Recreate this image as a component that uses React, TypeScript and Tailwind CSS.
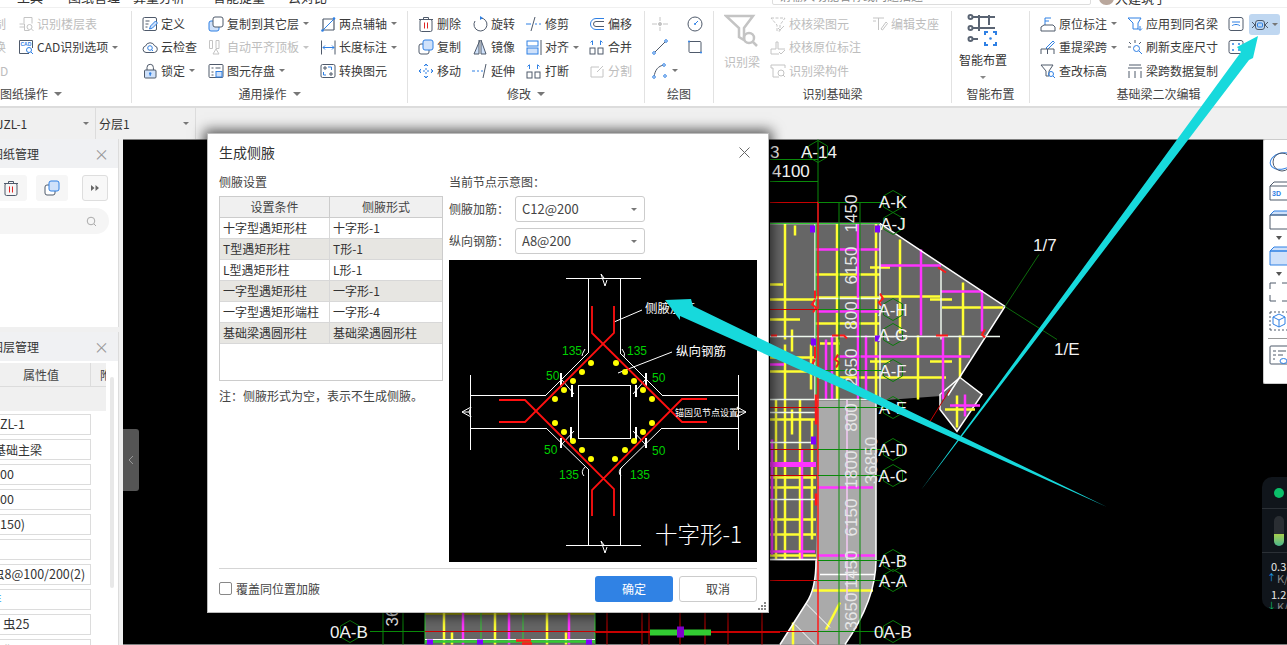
import type { ReactNode } from 'react';

const G = '#4f5a6b';
const B = '#2f80e4';
const L = '#cfe1fa';
const OFF = '#c4c4c4';

function Svg({ children, w = 16, h = 16 }: { children: ReactNode; w?: number; h?: number }) {
  return (
    <svg width={w} height={h} viewBox={`0 0 ${w} ${h}`} fill="none" strokeWidth={1} className="shrink-0">
      {children}
    </svg>
  );
}

const icons: Record<string, ReactNode> = {
  floorTable: <g stroke={OFF}><path d="M6 1.5h8v6M1.5 8h5v6.5h5M6 1.5v6M1.5 11h5" /><circle cx="11.5" cy="11" r="2.5" /><path d="m13.5 13 2 2" /></g>,
  cadOpt: <g><path d="M11 14.5H1.5v-13h13V9" stroke={G} /><text x="2.5" y="6.5" fontSize="5" fontWeight="700" fill={B} fontFamily="Liberation Sans">CAD</text><circle cx="11" cy="11" r="2.5" stroke={B} /><path d="m13 13 2 2" stroke={B} /></g>,
  define: <g stroke={G}><rect x="1" y="1.5" width="13.5" height="13" rx="1.5" /><path d="M3.5 5h4M3.5 8h3M3.5 11h2" /><path d="m7.5 13 1-3 5-5 2 2-5 5z" stroke={B} fill={L} /></g>,
  cloud: <g><path d="M4 13.5a3.3 3.3 0 0 1-.4-6.5 4.8 4.8 0 0 1 9-.2 3.4 3.4 0 0 1-.2 6.7z" stroke={G} /><circle cx="8" cy="9" r="2.3" stroke={B} /><path d="m9.7 10.7 1.3 1.3" stroke={B} /></g>,
  lock: <g><path d="M5 7V4.500a3.2 3.2 0 0 1 6.400 0V7" stroke={G} /><rect x="2.500" y="7" width="11.500" height="8" rx="1" stroke={G} fill={L} /><circle cx="8.200" cy="10.500" r="1.200" fill={B} /><path d="M8.200 11v2" stroke={B} /></g>,
  copy: <g><rect x="1" y="5" width="10" height="10" rx="2" stroke={B} fill={L} /><rect x="5" y="1" width="10" height="10" rx="2" stroke={G} fill="#fff" /></g>,
  copyBlue: <g><rect x="1" y="5" width="10" height="10" rx="2" stroke={G} fill="#fff" /><rect x="5" y="1" width="10" height="10" rx="2" stroke={B} fill={L} /></g>,
  alignTop: <g stroke={OFF}><path d="M1.500 1.500h3v8h-3zM8 1.500h3v8H8z" /><path d="M5 15l3-5 3 5z" /></g>,
  save: <g><rect x="1" y="1.500" width="14" height="13" rx="1" stroke={G} /><path d="M3.500 5h2M7.500 5h5M3.500 9h2M3.500 12h2" stroke={G} /><rect x="8" y="8.500" width="6" height="5.500" fill={L} stroke={B} /></g>,
  twoPoint: <g><path d="M3 3h11M3 14h11M3 3v11M14 3v11" stroke={G} strokeWidth={1.200} /><path d="M2 15 15 2" stroke={B} /><circle cx="2.500" cy="14.500" r="1.300" fill={B} /><circle cx="14" cy="2.500" r="1.300" fill={B} /></g>,
  dim: <g><path d="M1.500 1.500v14M15 1.500v14" stroke={G} /><path d="M3 8.500h11M5 6.500l-2 2 2 2M12 6.500l2 2-2 2" stroke={B} /></g>,
  convert: <g><rect x="1" y="1.500" width="14" height="13" rx="1.500" stroke={G} /><path d="M8 4h3.500v3M6 12H3.500V9" stroke={B} /><path d="M4 4h2v2H4zM10 10h2v2h-2z" stroke={G} /></g>,
  trash: <g stroke={G}><rect x="2" y="3.500" width="12" height="12" rx="1.500" /><path d="M1 3.500h14M5.500 3.500V1.500h5v2" /><path d="M6.500 6.500v6M9.500 6.500v6" stroke="#e02525" /></g>,
  move: <g stroke={B}><path d="M8 1v14M1 8h14" strokeDasharray="2 2" /><path d="M6 3l2-2 2 2M6 13l2 2 2-2M3 6 1 8l2 2M13 6l2 2-2 2" /></g>,
  rotate: <g><path d="M8.500 2a6.500 6.500 0 1 1-5.500 3" stroke={G} /><path d="M8 0v4l3-2z" fill={B} /></g>,
  mirror: <g><path d="M8 1 2 15h5V1M9 1v14h5z" stroke={G} fill={L} /></g>,
  trim: <g stroke={B}><path d="M0 8h5M9 8h2M13 8h2" /><path d="M5 15 9 1" stroke={G} /></g>,
  extend: <g stroke={B}><path d="M0 8h3M5 8h2M9 8h2" /><path d="M11 15l3-14" stroke={G} /></g>,
  alignRow: <g><rect x="1" y="2" width="11" height="5" stroke={B} /><rect x="1" y="9" width="11" height="6" stroke={B} fill={L} /><path d="M15 1v15" stroke={G} /></g>,
  breakUp: <g><rect x="1" y="9" width="5" height="6" stroke={G} /><rect x="9" y="9" width="5" height="6" stroke={G} /><path d="M3.500 6V2M1.500 3.500l2-2M11.500 6V2M13.500 3.500l-2-2" stroke={B} /></g>,
  offset: <g><path d="M15 2.500H7a5.500 5.500 0 0 0 0 11h8" stroke={B} /><path d="M15 5.500H7a2.500 2.500 0 0 0 0 5h8" stroke={G} /></g>,
  split: <g stroke={OFF}><path d="M14 6v8H2V4h8" /><path d="m8 9 6-6" /></g>,
  point: <g stroke={OFF}><path d="M0 8h5M11 8h5M8 1v4M8 11v4" /><circle cx="8" cy="8" r="1.500" fill={OFF} /></g>,
  circle: <g><circle cx="8" cy="8" r="7" stroke={G} /><path d="M8 8l3-3" stroke={B} /><circle cx="8" cy="8" r="1" fill={B} /></g>,
  line: <g stroke={B}><path d="M2 14 14 2" stroke={G} /><circle cx="2" cy="14" r="1.300" fill="#fff" /><circle cx="14" cy="2" r="1.300" fill="#fff" /></g>,
  rect: <g><rect x="2" y="2.500" width="12" height="11" rx="1" stroke={G} /><circle cx="2" cy="2.500" r="1" fill={B} /><circle cx="14" cy="13.500" r="1" fill={B} /></g>,
  arc: <g><path d="M2 14C3 7 6 3 12 2" stroke={G} /><circle cx="2" cy="14" r="1.300" stroke={B} fill="#fff" /><circle cx="12" cy="2" r="1.300" stroke={B} fill="#fff" /><circle cx="13" cy="13" r="1.300" stroke={B} fill="#fff" /></g>,
  checkBeam: <g stroke={OFF}><path d="M1 2h14l-5 7v6H7V9z" strokeDasharray="3 1.500" /><path d="m8 12 2 2 4-4" /></g>,
  checkLabel: <g stroke={OFF}><path d="M1 15h8M1 15v-5h5V3h2v7h7" /><path d="m9 13 2 2 4-4" /></g>,
  beamPart: <g stroke={OFF}><path d="M1 2h14v3M1 2v3h2v9h6" /><circle cx="11" cy="10" r="3" /><path d="m13 12 2 2" /></g>,
  support: <g stroke={OFF}><path d="M1 2h11M6.500 2v12M1 5h3" /><path d="M9 13l5-7 1.500 1.500L10.500 14z" /></g>,
  origin: <g><path d="M5 2v7M5 2h6M5 5h4" stroke={B} /><path d="M1 15v-4l3-2h9l2 2v4z" stroke={G} /></g>,
  reextract: <g><path d="M6 9l7-7 1.500 1.500-7 7z" stroke={B} /><path d="M1 15v-5h13v5M7.500 10v5" stroke={G} /></g>,
  query: <g><path d="M1 2h12l-4 6v5H6V8z" stroke={G} /><circle cx="11" cy="11" r="2.500" stroke={B} /><path d="m13 13 2 2" stroke={B} /></g>,
  apply: <g><path d="M1 2h13l-3 5v6H6V7z" stroke={B} /><path d="M13 10v4M11 12.500l2 2 2-2" stroke={B} /></g>,
  refresh: <g><path d="M2 3l2 2M8 1v3M14 3l-2 2M1 8h3" stroke={G} /><circle cx="9.500" cy="9.500" r="3" stroke={B} /><path d="m12 12 3 3" stroke={B} /></g>,
  spanCopy: <g stroke={G}><path d="M1 5h14M2 15V8M8 15V8M14 15V8M2 2h12" /></g>,
  beamA: <g><rect x="1" y="1.500" width="14" height="13" rx="2" stroke={G} /><path d="M4 6h8M4 10c1-2 7-2 8 0" stroke={B} /></g>,
  beamB: <g><rect x="1" y="1.500" width="14" height="13" rx="2" stroke={G} /><circle cx="5" cy="5" r="1" fill={B} /><circle cx="11" cy="5" r="1" fill={B} /><circle cx="5" cy="11" r="1" fill={B} /><circle cx="11" cy="11" r="1" fill={B} /></g>,
};

function Tool({ icon, label, caret, off }: { icon: string; label: string; caret?: boolean; off?: boolean }) {
  return (
    <div className={`flex h-[23.5px] items-center whitespace-nowrap text-[12px] ${off ? 'text-[#bdbdbd]' : 'text-[#3a3a3a]'}`}>
      <span className="mr-[3px]">
        <Svg>{icons[icon]}</Svg>
      </span>
      {label}
      {caret && <Caret off={off} />}
    </div>
  );
}

function Caret({ off }: { off?: boolean }) {
  return <span className={`ml-[4px] h-0 w-0 border-x-[3px] border-t-[3px] border-x-transparent ${off ? 'border-t-[#c4c4c4]' : 'border-t-[#777]'}`} />;
}

function Footer({ children, caret }: { children: string; caret?: boolean }) {
  return (
    <div className="flex h-[20px] items-center justify-center whitespace-nowrap text-[12px] text-[#444]">
      {children}
      {caret && <span className="ml-[6px] h-0 w-0 border-x-[4px] border-t-[4px] border-x-transparent border-t-[#777]" />}
    </div>
  );
}

function Sep() {
  return <div className="my-[3px] w-px shrink-0 bg-[#e2e2e2]" />;
}

function Ribbon() {
  return (
    <div className="flex h-[101px] shrink-0 border-b-2 border-t border-b-[#dcdcdc] border-t-[#f0f0f0] bg-white">
      <section className="w-[131px] shrink-0 overflow-hidden">
        <div className="flex h-[76px] pt-[4px]">
          <div className="-ml-[6px] w-[24px] text-[12px] text-[#bdbdbd]">
            <div className="flex h-[23.5px] items-center">制</div>
            <div className="flex h-[23.5px] items-center">换</div>
            <div className="flex h-[23.5px] items-center pl-[6px]">D</div>
          </div>
          <div>
            <Tool icon="floorTable" label="识别楼层表" off />
            <Tool icon="cadOpt" label="CAD识别选项" caret />
          </div>
        </div>
        <div className="flex h-[20px] items-center whitespace-nowrap text-[12px] text-[#444]">
          图纸操作
          <span className="ml-[6px] h-0 w-0 border-x-[4px] border-t-[4px] border-x-transparent border-t-[#777]" />
        </div>
      </section>
      <Sep />
      <section className="w-[275px] shrink-0">
        <div className="flex h-[76px] pl-[10px] pt-[4px]">
          <div className="w-[66px]">
            <Tool icon="define" label="定义" />
            <Tool icon="cloud" label="云检查" />
            <Tool icon="lock" label="锁定" caret />
          </div>
          <div className="w-[112px]">
            <Tool icon="copy" label="复制到其它层" caret />
            <Tool icon="alignTop" label="自动平齐顶板" caret off />
            <Tool icon="save" label="图元存盘" caret />
          </div>
          <div>
            <Tool icon="twoPoint" label="两点辅轴" caret />
            <Tool icon="dim" label="长度标注" caret />
            <Tool icon="convert" label="转换图元" />
          </div>
        </div>
        <Footer caret>通用操作</Footer>
      </section>
      <Sep />
      <section className="w-[236px] shrink-0">
        <div className="flex h-[76px] pl-[10px] pt-[4px]">
          <div className="w-[54px]">
            <Tool icon="trash" label="删除" />
            <Tool icon="copyBlue" label="复制" />
            <Tool icon="move" label="移动" />
          </div>
          <div className="w-[54px]">
            <Tool icon="rotate" label="旋转" />
            <Tool icon="mirror" label="镜像" />
            <Tool icon="extend" label="延伸" />
          </div>
          <div className="w-[63px]">
            <Tool icon="trim" label="修剪" />
            <Tool icon="alignRow" label="对齐" caret />
            <Tool icon="breakUp" label="打断" />
          </div>
          <div>
            <Tool icon="offset" label="偏移" />
            <Tool icon="breakUp" label="合并" />
            <Tool icon="split" label="分割" off />
          </div>
        </div>
        <Footer caret>修改</Footer>
      </section>
      <Sep />
      <section className="w-[68px] shrink-0">
        <div className="flex h-[76px] pl-[7px] pt-[4px]">
          <div className="w-[35px]">
            <Tool icon="point" label="" />
            <Tool icon="line" label="" />
            <div className="flex h-[23.5px] items-center">
              <Svg>{icons.arc}</Svg>
              <Caret />
            </div>
          </div>
          <div>
            <Tool icon="circle" label="" />
            <Tool icon="rect" label="" />
          </div>
        </div>
        <Footer>绘图</Footer>
      </section>
      <Sep />
      <section className="w-[237px] shrink-0">
        <div className="flex h-[76px] pl-[10px] pt-[4px]">
          <div className="w-[46px] pt-[1px] text-[12px] text-[#bdbdbd]">
            <Svg w={34} h={34}>
              <g stroke={OFF} strokeWidth={2.500}>
                <path d="M2 3h27l-9 12v12l-5-3V15z" />
                <circle cx="25" cy="25" r="5" />
                <path d="m29 29 4 4" />
              </g>
            </Svg>
            <div className="mt-[6px] w-[36px] whitespace-nowrap">识别梁</div>
          </div>
          <div className="w-[102px]">
            <Tool icon="checkBeam" label="校核梁图元" off />
            <Tool icon="checkLabel" label="校核原位标注" off />
            <Tool icon="beamPart" label="识别梁构件" off />
          </div>
          <div>
            <Tool icon="support" label="编辑支座" off />
          </div>
        </div>
        <Footer>识别基础梁</Footer>
      </section>
      <Sep />
      <section className="w-[77px] shrink-0">
        <div className="flex h-[76px] w-[62px] flex-col items-center pt-[6px] text-[12px] text-[#333]">
          <Svg w={32} h={32}>
            <g stroke="#5a6473" strokeWidth={2}>
              <path d="M5 3h23M5 14h23M5 25h6M12 1v16M22 1v10" />
              <circle cx="3.500" cy="3" r="2" />
              <circle cx="3.500" cy="14" r="2" />
              <circle cx="3.500" cy="25" r="2" />
            </g>
            <path d="M18 21v-3h3M26 18h3v3M29 28v3h-3M21 31h-3v-3" stroke={B} strokeWidth={2} />
            <circle cx="23.500" cy="24.500" r="1.300" fill={B} />
          </Svg>
          <div className="mt-[5px] whitespace-nowrap">智能布置</div>
          <span className="mt-[7px] h-0 w-0 border-x-[3px] border-t-[3px] border-x-transparent border-t-[#888]" />
        </div>
        <Footer>智能布置</Footer>
      </section>
      <Sep />
      <section className="min-w-0 flex-1">
        <div className="flex h-[76px] pl-[10px] pt-[4px]">
          <div className="w-[87px]">
            <Tool icon="origin" label="原位标注" caret />
            <Tool icon="reextract" label="重提梁跨" caret />
            <Tool icon="query" label="查改标高" />
          </div>
          <div className="w-[101px]">
            <Tool icon="apply" label="应用到同名梁" />
            <Tool icon="refresh" label="刷新支座尺寸" />
            <Tool icon="spanCopy" label="梁跨数据复制" />
          </div>
          <div className="w-[21px]">
            <Tool icon="beamA" label="" />
            <Tool icon="beamB" label="" />
          </div>
          <div className="mt-[2px] flex h-[21px] w-[31px] items-center justify-center rounded-[3px] bg-[#bfd7f1]">
            <Svg w={16} h={12}>
              <rect x="3.500" y="1.500" width="9" height="9" rx="2.500" stroke={G} />
              <rect x="5.500" y="4" width="5" height="4" rx="1" stroke={B} />
              <path d="M0 3l3 3-3 3M16 3l-3 3 3 3" stroke={G} />
            </Svg>
            <Caret />
          </div>
        </div>
        <Footer>基础梁二次编辑</Footer>
      </section>
    </div>
  );
}

const fields = [
  { text: 'ZL-1', cls: 'ml-0' },
  { text: '基础主梁', cls: '-ml-[6px] text-[12px]' },
  { text: '00', cls: 'ml-0' },
  { text: '00', cls: 'ml-0' },
  { text: '150)', cls: 'ml-0' },
  { text: '', cls: 'ml-0' },
  { text: '虫8@100/200(2)', cls: '-ml-[8px]' },
  { text: '非', cls: '-ml-[11px] text-[#55b4f5]' },
  { text: '虫25', cls: 'ml-[3px]' },
  { text: '″', cls: 'ml-[4px]' },
];

function LeftPanel() {
  return (
    <aside className="flex w-[123px] shrink-0 flex-col bg-[#f0f0f0] pr-[4px] text-[12px] text-[#333]">
      <div className="h-[188px] shrink-0 overflow-hidden border-r border-[#dcdcdc] bg-white">
        <div className="flex h-[29px] items-center bg-[#f0f1f3] pr-[9px] text-[12px]">
          <span className="-ml-[9px] whitespace-nowrap">图纸管理</span>
          <span className="ml-auto text-[15px] leading-none text-[#999]">×</span>
        </div>
        <div className="mt-[7px] flex h-[26px] items-center">
          <div className="flex h-[26px] w-[27px] items-center rounded-r-[3px] bg-[#f6f6f6] pl-[3px]">
            <Svg>{icons.trash}</Svg>
          </div>
          <div className="ml-[9px] flex h-[26px] w-[32px] items-center justify-center rounded-[3px] bg-[#f6f6f6]">
            <Svg>{icons.copyBlue}</Svg>
          </div>
          <div className="ml-[14px] flex h-[26px] w-[26px] items-center justify-center rounded-[3px] border border-[#dedede] bg-[#f8f8f8]">
            <svg width="8" height="6" viewBox="0 0 8 6" fill="#666">
              <path d="M0 0l3.500 3L0 6zM4.500 0 8 3 4.500 6z" />
            </svg>
          </div>
        </div>
        <div className="mt-[7px] flex h-[26px] w-[109px] items-center justify-end rounded-r-full bg-[#f5f5f5] pr-[12px]">
          <svg width="11" height="11" viewBox="0 0 11 11" fill="none" stroke="#aaa">
            <circle cx="5" cy="5" r="3.800" />
            <path d="m8 8 2 2" />
          </svg>
        </div>
      </div>
      <div className="mt-[5px] min-h-0 flex-1 overflow-hidden border-r border-[#dcdcdc] bg-white">
        <div className="flex h-[29px] items-center bg-[#f0f1f3] pr-[9px]">
          <span className="-ml-[9px] whitespace-nowrap">图层管理</span>
          <span className="ml-auto text-[15px] leading-none text-[#999]">×</span>
        </div>
        <div className="relative">
          <div className="mt-[2px] flex h-[24px] w-[106px] overflow-hidden border-b border-[#dcdcdc] bg-[#f0f0f0] text-center text-[#444]">
            <div className="flex w-[91px] shrink-0 items-center justify-center border-r border-[#dcdcdc] pr-[8px]">属性值</div>
            <div className="flex items-center whitespace-nowrap pl-[9px]">附</div>
          </div>
          <div className="h-[24px] w-[106px] bg-[#f0f0f0]" />
          <div className="mt-[3px] flex flex-col gap-[4px]">
            {fields.map((f, i) => (
              <div key={i} className="flex h-[21px] w-[91px] shrink-0 items-center overflow-hidden whitespace-nowrap border border-l-0 border-[#dcdcdc] bg-white text-[12.5px]">
                <span className={f.cls}>{f.text}</span>
              </div>
            ))}
          </div>
          <div className="absolute left-[110px] top-[14px] h-[211px] w-[4px] rounded-full bg-[#e8e8e8]" />
        </div>
      </div>
    </aside>
  );
}

const yellow = [
  [785, 224, 785, 340], [795, 226, 795, 236], [837, 224, 837, 400], [876, 224, 876, 400], [900, 240, 900, 334], [963, 283, 963, 336],
  [815, 275, 880, 275], [815, 298, 880, 298], [815, 324, 880, 324], [880, 297, 940, 297], [930, 300, 952, 300], [942, 308, 1003, 308], [870, 268, 890, 268],
  [770, 285, 783, 285], [770, 300, 815, 300], [770, 320, 800, 320], [792, 330, 792, 352], [820, 344, 840, 344], [870, 362, 890, 362], [930, 362, 952, 362], [818, 378, 946, 378],
  [838, 340, 838, 400], [918, 336, 918, 400], [960, 336, 960, 378], [770, 358, 816, 358], [770, 372, 816, 372], [785, 345, 785, 560], [776, 400, 776, 560],
  [792, 410, 792, 435], [811, 345, 811, 390], [800, 400, 800, 560], [770, 420, 816, 420], [770, 478, 816, 478], [770, 488, 816, 488], [770, 520, 816, 520], [770, 535, 816, 535], [770, 556, 816, 556],
  [812, 420, 812, 540], [813, 591, 873, 591], [840, 603, 826, 630], [793, 623, 793, 645], [945, 410, 975, 410], [957, 396, 957, 428],
];
const magenta = [
  [858, 224, 858, 400], [815, 250, 880, 250], [880, 266, 941, 266], [921, 250, 921, 336], [941, 292, 983, 292], [982, 292, 982, 332], [817, 312, 880, 312],
  [837, 357, 970, 357], [826, 340, 826, 400], [832, 336, 832, 400], [866, 336, 866, 400], [943, 336, 943, 400], [770, 365, 784, 365],
  [772, 440, 772, 555], [802, 450, 802, 560], [770, 552, 815, 552], [818, 488, 873, 488], [818, 556, 875, 556], [965, 395, 965, 417], [950, 406, 980, 406],
];
const hexes: [number, number, string][] = [
  [818, 152, ''], [893, 202, 'A-K'], [893, 224, 'A-J'], [893, 310, 'A-H'], [893, 335, 'A-G'], [893, 371, 'A-F'], [893, 408, 'A-E'],
  [893, 450, 'A-D'], [893, 476, 'A-C'], [893, 561, 'A-B'], [893, 581, 'A-A'], [893, 632, ''],
];
const dims: [number, number, string][] = [
  [851, 214, '1450'], [851, 266, '6150'], [851, 316, '800'], [851, 368, '2650'], [851, 418, '800'], [851, 470, '1800'], [851, 518, '6150'], [851, 570, '1450'], [851, 612, '3650'], [871, 461, '36850'],
];
const gridV = [607, 642, 649, 680, 705, 728, 762];

function hexPoints(cx: number, cy: number, r = 11) {
  return [0, 60, 120, 180, 240, 300]
    .map((a) => {
      const t = ((a + 30) * Math.PI) / 180;
      return `${cx + r * Math.cos(t)},${cy + r * Math.sin(t)}`;
    })
    .join(' ');
}

function CadDrawing() {
  const sans = 'Liberation Sans, sans-serif';
  return (
    <svg viewBox="123 140 1164 505" className="block h-full w-full" fill="none">
      <rect x="123" y="140" width="1164" height="505" fill="#000" />
      <polygon points="770,224 880,224 1005,307 948,396 880,401 818,401 816,561 770,561" fill="#666" />
      <path d="M818 401H876V561Q876 600 845 645H780L806 604Q816 590 816 561Z" fill="#aaa" />
      <polygon points="960,378 982,395 957,432 940,410 940,395" fill="#666" stroke="#fff" strokeWidth={1.500} />
      <rect x="425" y="612" width="170" height="33" fill="#666" />
      {yellow.map((l, i) => (
        <line key={i} x1={l[0]} y1={l[1]} x2={l[2]} y2={l[3]} stroke="#ffff33" strokeWidth={2.500} />
      ))}
      {magenta.map((l, i) => (
        <line key={i} x1={l[0]} y1={l[1]} x2={l[2]} y2={l[3]} stroke="#ff33ff" strokeWidth={2.500} />
      ))}
      <path d="M770 465H816" stroke="#ff33ff" strokeWidth={5} />
      <path d="M847 400V600" stroke="#f5c8f5" strokeWidth={1.500} />
      <g stroke="#fff" strokeWidth={1.500}>
        <path d="M770 224H880L1005 307L948 396" />
        <path d="M770 337H1000M815 224V400M880 224V400M941 270V340M770 400H880M770 413H816M770 443H816M770 500H816M815 299H880" stroke="#eef8ee" />
        <path d="M816 561Q816 590 806 604L780 645M876 401V561Q876 600 845 645M820 575H875M770 560H818" />
        <path d="M806 604 830 628M795 625 815 645" strokeWidth={1} />
      </g>
      <path d="M770 224H880M816 224V400" stroke="#33cc33" strokeWidth={1} />
      <g strokeWidth={2.500}>
        <path d="M425 614H595" stroke="#a8a800" />
        <path d="M444 612V645M495 612V645M547 612V645M452 633V645M566 633V645" stroke="#ffff33" />
        <path d="M463 612V645M509 612V645M569 612V645" stroke="#ff33ff" />
        <path d="M425 642H595" stroke="#33cc33" />
      </g>
      <path d="M481 612V645M523 612V645M425 612V645M595 612V645" stroke="#33cc33" strokeWidth={1} />
      <path d="M425 640H595" stroke="#fff" strokeWidth={1} />
      <g fill="#8000ff">
        <rect x="810" y="226" width="5" height="7" />
        <rect x="875" y="226" width="5" height="7" />
        <rect x="811" y="339" width="5" height="7" />
        <rect x="875" y="336" width="5" height="6" />
        <rect x="811" y="437" width="5" height="8" />
        <rect x="427" y="640" width="6" height="5" />
        <rect x="477" y="640" width="6" height="5" />
        <rect x="586" y="640" width="6" height="5" />
      </g>
      <g stroke="#ff1a1a" strokeWidth={2}>
        <path d="M815 291v8M815 300l-3 5 4 3-3 5M880 294l3 5-4 4 2 3M815 347v12M815 360l-3 5 4 3-3 5M832 336h12l3 3M936 336h12M938 268l8 5M985 330l-3 5 3 3M771 336h6M838 355l-3 5 4 3-3 5" />
        <path d="M816 395v30M816 494v12M516 641h15M522 644h10" strokeWidth={2.500} />
      </g>
      <g stroke="#c80000" strokeWidth={1}>
        <path d="M770 203H818M770 310H818M770 408H818M770 450H818M770 476H818M770 581H818M818 632H425M930 422 950 390M595 633H780" />
        {gridV.map((x) => (
          <path key={x} d={`M${x} 612V645`} />
        ))}
      </g>
      <path d="M818 202V645" stroke="#ff1a1a" strokeWidth={1.500} />
      <path d="M818 140V202" stroke="#0a8a0a" strokeWidth={1} />
      <g stroke="#0a8a0a" strokeWidth={1}>
        <path d="M770 160H818M770 182H818M818 203H882M839 203V645M860 203V645M818 310H882M818 371H882M818 408H882M818 450H882M818 476H882M818 561H882M818 581H882M818 632H882M370 632H425M383 612V645M403 612V645" />
        <path d="M1005 307 1039 255M1005 307 1057 340" stroke="#0c6a0c" />
      </g>
      <path d="M650 633H711" stroke="#33cc33" strokeWidth={6} />
      <rect x="677" y="627" width="7" height="11" fill="#8000cc" />
      {hexes.map(([x, y]) => (
        <polygon key={`${x}-${y}`} points={hexPoints(x, y)} stroke="#0a7a0a" strokeWidth={1} />
      ))}
      <polygon points={hexPoints(350, 632)} stroke="#0a7a0a" strokeWidth={1} />
      {hexes.filter((h) => h[2]).map(([x, y, t]) => (
        <text key={t} x={x} y={y + 6} textAnchor="middle" fontFamily={sans} fontSize={17} fill="#f2f2f2">{t}</text>
      ))}
      {dims.map(([x, y, t]) => (
        <text key={`${y}${t}`} x={x} y={y} transform={`rotate(-90 ${x} ${y})`} textAnchor="middle" dominantBaseline="central" fontFamily={sans} fontSize={17} fill="#e6e6e6">{t}</text>
      ))}
      <g fontFamily={sans} fontSize={17} fill="#f2f2f2">
        <text x="770" y="158">3</text>
        <text x="801" y="158">A-14</text>
        <text x="772" y="177">4100</text>
        <text x="1033" y="251">1/7</text>
        <text x="1054" y="355">1/E</text>
        <text x="330" y="638">0A-B</text>
        <text x="874" y="638">0A-B</text>
        <text x="398" y="627" transform="rotate(-90 398 627)">36</text>
      </g>
    </svg>
  );
}

const dots: [number, number][] = [
  [591, 363], [582, 372], [573, 381], [564, 390], [555, 399], [616, 363], [625, 372], [634, 381], [643, 390], [652, 399],
  [555, 423], [564, 432], [573, 441], [582, 450], [591, 459], [652, 423], [643, 432], [634, 441], [625, 450], [615, 459],
];
const greens: [number, number, string][] = [
  [562, 355, '135'], [627, 355, '135'], [546, 380, '50'], [652, 382, '50'], [544, 454, '50'], [652, 455, '50'], [559, 479, '135'], [630, 479, '135'],
];

function NodeDiagram() {
  return (
    <svg viewBox="449 260 308 302" className="block h-[302px] w-[308px]" fill="none">
      <rect x="449" y="260" width="308" height="302" fill="#000" />
      <g stroke="#fff" strokeWidth={1}>
        <g shapeRendering="crispEdges">
          <path d="M566 278H641M588 278V353M620 278V353M546 395H470M662 395H738" />
          <path d="M566 545H641M588 545V469M620 545V469M546 428H470M662 428H738" />
          <path d="M470 375V450M738 375V450M578 385H630V438H578z" />
        </g>
        <path d="M588 353 546 395M620 353 662 395M588 469 546 428M620 469 662 428" />
        <path d="M604 278l-3-4 4 12 2-6M604 545l-3-4 4 12 2-6" />
        <path d="M470 412l-8 0 9-5-2 5 2 5-9-5M738 412h8l-9-5 2 5-2 5 9-5" />
        <path d="m614 322 28-12M618 373l54-21" />
        <path d="M562 380l12 14M645 380l-12 14M562 444l12-13M645 444l-12-13" />
        <path d="M585 349q-3 5-3 7M622 349q4 5 2 8M585 467q-5 5-1 9M622 467q-5 5-1 9" />
      </g>
      <g stroke="#fff" strokeWidth={2}>
        <path d="M561 373v14M646 373v14M561 438v10M646 438v10M572 385v12M636 385v12M571 427v13M636 427v13" />
      </g>
      <g stroke="#ff1010" strokeWidth={1.800}>
        <path d="M592 306V333L682 422H707M614 306V333L525 422H499" />
        <path d="M592 516V490L682 399H707M614 516V489L525 400H499" />
      </g>
      {dots.map(([x, y], i) => (
        <circle key={i} cx={x} cy={y} r={3} fill="#ffff00" />
      ))}
      <g fontFamily="Liberation Sans, sans-serif" fontSize={12} fill="#00d000">
        {greens.map(([x, y, t]) => (
          <text key={`${x}${y}`} x={x} y={y}>{t}</text>
        ))}
      </g>
      <g fontFamily="'Noto Sans CJK SC', sans-serif" fill="#fff">
        <text x="645" y="313" fontSize={12.500}>侧腋加筋</text>
        <text x="676" y="356" fontSize={12.500}>纵向钢筋</text>
        <text x="675" y="416" fontSize={9}>锚固见节点设置</text>
        <text x="655" y="543" fontSize={22.500} fontWeight={300}>十字形-1</text>
      </g>
    </svg>
  );
}

const rows = [
  ['十字型遇矩形柱', '十字形-1'],
  ['T型遇矩形柱', 'T形-1'],
  ['L型遇矩形柱', 'L形-1'],
  ['一字型遇矩形柱', '一字形-1'],
  ['一字型遇矩形端柱', '一字形-4'],
  ['基础梁遇圆形柱', '基础梁遇圆形柱'],
];

function SelectBox({ label, value }: { label: string; value: string }) {
  return (
    <div className="flex h-[26px] items-center">
      <span className="w-[66px]">{label}</span>
      <div className="flex h-[26px] w-[130px] items-center justify-between rounded-[3px] border border-[#ccc] pl-[6px] pr-[7px]">
        <span className="text-[13px]">{value}</span>
        <Caret />
      </div>
    </div>
  );
}

function Dialog() {
  return (
    <div className="absolute left-[207px] top-[133px] z-10 h-[480px] w-[562px] border border-[#bbb] bg-white px-[11px] text-[12px] text-[#444] shadow-[0_0_12px_3px_rgba(0,0,0,0.65)]">
      <div className="flex h-[38px] items-center justify-between pb-[2px]">
        <span className="text-[14px] text-[#333]">生成侧腋</span>
        <svg width="11" height="11" viewBox="0 0 11 11" stroke="#666" className="mr-[7px]">
          <path d="m.5.5 10 10M10.500.5l-10 10" />
        </svg>
      </div>
      <div className="flex h-[396px]">
        <div className="w-[230px] shrink-0">
          <div className="mb-[4px] flex h-[20px] items-center">侧腋设置</div>
          <div className="h-[185px] w-[224px] border border-[#ccc] text-[#333]">
            <div className="flex h-[21px] border-b border-[#ccc] bg-[#f0f0f0] text-center leading-[20px] text-[#444]">
              <div className="w-[110px] border-r border-[#ccc]">设置条件</div>
              <div className="flex-1">侧腋形式</div>
            </div>
            {rows.map(([a, b], i) => (
              <div key={a} className={`flex h-[21px] border-b border-[#d8d8d8] leading-[20px] ${i % 2 ? 'bg-[#e7e6e2]' : 'bg-white'}`}>
                <div className="w-[110px] whitespace-nowrap border-r border-[#d8d8d8] pl-[3px]">{a}</div>
                <div className="flex-1 whitespace-nowrap pl-[3px]">{b}</div>
              </div>
            ))}
          </div>
          <div className="mt-[6px]">注：侧腋形式为空，表示不生成侧腋。</div>
        </div>
        <div className="flex flex-col">
          <div className="mb-[4px] flex h-[20px] items-center">当前节点示意图：</div>
          <SelectBox label="侧腋加筋：" value="C12@200" />
          <div className="mt-[6px]">
            <SelectBox label="纵向钢筋：" value="A8@200" />
          </div>
          <div className="mt-[6px]">
            <NodeDiagram />
          </div>
        </div>
      </div>
      <div className="flex h-[44px] items-center border-t border-[#d5d5d5] pb-[4px]">
        <span className="h-[13px] w-[13px] rounded-[2px] border border-[#888]" />
        <span className="ml-[4px]">覆盖同位置加腋</span>
        <button className="ml-auto h-[26px] w-[78px] rounded-[3px] bg-[#3082e4] text-white">确定</button>
        <button className="ml-[6px] h-[26px] w-[78px] rounded-[3px] border border-[#ccc] bg-white text-[#444]">取消</button>
      </div>
      <svg width="8" height="8" viewBox="0 0 8 8" fill="#888" className="absolute bottom-[2px] right-[2px]">
        <rect x="6" y="0" width="2" height="2" />
        <rect x="3" y="3" width="2" height="2" />
        <rect x="6" y="3" width="2" height="2" />
        <rect x="0" y="6" width="2" height="2" />
        <rect x="3" y="6" width="2" height="2" />
        <rect x="6" y="6" width="2" height="2" />
      </svg>
    </div>
  );
}

function SideTools() {
  return (
    <div className="absolute right-0 top-0 z-0 h-[245px] w-[24px] overflow-hidden rounded-l-[2px] border border-r-0 border-[#ccc] bg-white pl-[5px] pt-[12px]">
      <svg width="24" height="20" viewBox="0 0 24 20" fill="none" stroke={G}>
        <ellipse cx="13" cy="9" rx="12" ry="8" stroke={B} transform="rotate(-15 13 9)" />
        <circle cx="13" cy="10" r="9" />
      </svg>
      <svg width="24" height="20" viewBox="0 0 24 20" fill="none" stroke={G} className="mt-[9px]">
        <path d="M1 5h18v14H1zM1 5l4-4h18v14l-4 4M19 5l4-4" />
        <text x="3" y="15" fontSize="7" fontWeight="700" fill={B} stroke="none" fontFamily="Liberation Sans">3D</text>
      </svg>
      <svg width="24" height="20" viewBox="0 0 24 20" fill="none" stroke={G} className="mt-[9px]">
        <path d="M1 5l4-4h18l-4 4z" fill={L} stroke={B} />
        <path d="M1 5h18v14H1z" />
      </svg>
      <div className="ml-[7px] mt-[6px] h-0 w-0 border-x-[3px] border-t-[4px] border-x-transparent border-t-[#555]" />
      <svg width="24" height="20" viewBox="0 0 24 20" fill={L} stroke={B} className="mt-[6px]">
        <path d="M1 5l4-4h18l-4 4zM1 5h18v14H1z" />
      </svg>
      <div className="ml-[7px] mt-[6px] h-0 w-0 border-x-[3px] border-t-[4px] border-x-transparent border-t-[#555]" />
      <svg width="24" height="20" viewBox="0 0 24 20" fill="none" stroke={G} className="mt-[6px]">
        <path d="M7 1H1v6M1 13v6h6M13 1h11M13 19h11" />
      </svg>
      <svg width="24" height="20" viewBox="0 0 24 20" fill="none" stroke={G} className="mt-[9px]">
        <path d="M1 1h23M1 19h23M1 1v18" strokeDasharray="2 2" />
        <path d="M10 3l6 3v7l-6 3-6-3V6zM4 6l6 3 6-3M10 9v7" stroke={B} />
      </svg>
      <div className="-ml-[1px] mt-[7px] h-px w-[26px] bg-[#999]" />
      <svg width="24" height="20" viewBox="0 0 24 20" fill="none" stroke={G} className="mt-[6px]">
        <path d="M24 1H2a1 1 0 0 0-1 1v16a1 1 0 0 0 1 1h22M4 6h3M9 6h8M4 10h3M9 10h5M4 14h2" />
        <ellipse cx="14.500" cy="16" rx="3.500" ry="2.500" stroke={B} />
      </svg>
    </div>
  );
}

function NetWidget() {
  return (
    <div className="absolute right-0 top-[338px] h-[132px] w-[25px] overflow-hidden rounded-l-[10px] bg-[#10151b] text-[11px] leading-[12px]">
      <div className="flex h-[32px] items-center border-b border-[#2b3036] pl-[12px]">
        <span className="h-[10px] w-[10px] rounded-full bg-[#0bbf6a]" />
      </div>
      <div className="flex h-[44px] items-center border-b border-[#2b3036] pl-[12px]">
        <div className="flex h-[30px] w-[10px] flex-col justify-end overflow-hidden rounded-full bg-[#2a2e33]">
          <div className="h-[12px] bg-gradient-to-b from-[#a6cf4a] to-[#42b58a]" />
        </div>
      </div>
      <div className="whitespace-nowrap pl-[9px] pt-[7px] text-[#e6e6e6]">0.3</div>
      <div className="flex items-center whitespace-nowrap pl-[5px] text-[#888]">
        <span className="mr-[1px] text-[9px] text-[#1e9bf0]">↑</span>K/
      </div>
      <div className="whitespace-nowrap pl-[9px] pt-[4px] text-[#e6e6e6]">1.2</div>
      <div className="flex items-center whitespace-nowrap pl-[5px] text-[#888]">
        <span className="mr-[1px] text-[9px] text-[#0bbf6a]">↓</span>K/
      </div>
    </div>
  );
}

export default function App() {
  return (
    <div
      className="relative flex h-[645px] w-[1287px] flex-col overflow-hidden bg-white"
      style={{ fontFamily: "'Noto Sans CJK SC', 'Liberation Sans', sans-serif" }}
    >
      <div className="flex h-[7px] shrink-0 overflow-hidden whitespace-nowrap bg-white text-[13px] leading-[13px] text-[#333]">
        <div className="-mt-[10px] flex w-[772px] shrink-0 pl-[17px]">
          <span className="w-[51px]">工具</span>
          <span className="w-[65px]">图纸管理</span>
          <span className="w-[80px]">算量分析</span>
          <span className="w-[75px]">智能提量</span>
          <span>云对比</span>
        </div>
        <div className="-mt-[13px] h-[18px] w-[319px] shrink-0 rounded-[2px] border border-[#ddd] pl-[6px] text-[12px] leading-[16px] text-[#888]">
          请输入功能名称或问题描述
        </div>
        <div className="-mt-[9px] ml-[8px] flex">
          <span className="mr-[1px] h-[14px] w-[15px] rounded-full bg-[#b9a79c]" />
          <span>大建筑了</span>
        </div>
      </div>
      <Ribbon />
      <div className="flex h-[31px] shrink-0 bg-[#f0f0f0] text-[12px] text-[#333]">
        <div className="flex w-[96px] items-center justify-between border-r border-[#dcdcdc] pr-[6px]">
          <span className="-ml-[3px]">JZL-1</span>
          <Caret />
        </div>
        <div className="flex w-[100px] items-center justify-between border-r border-[#dcdcdc] pl-[3px] pr-[6px]">
          <span>分层1</span>
          <Caret />
        </div>
      </div>
      <div className="flex min-h-0 flex-1">
        <LeftPanel />
        <main className="relative min-w-0 flex-1">
          <CadDrawing />
          <div className="absolute left-0 top-[290px] flex h-[62px] w-[16px] items-center justify-center rounded-r-[3px] bg-[#555] text-[#aaa]">
            <svg width="6" height="10" viewBox="0 0 6 10" fill="none" stroke="#999">
              <path d="M5 1 1 5l4 4" />
            </svg>
          </div>
          <SideTools />
          <NetWidget />
        </main>
      </div>
      <Dialog />
      <svg viewBox="0 0 1287 645" className="pointer-events-none absolute inset-0 z-20 h-[645px] w-[1287px]">
        <polygon points="665,300 691,299 693,306 1107,507 680,316 680,320" fill="#17d9dc" />
        <polygon points="1258,36 1237,47 1241,52 921,490 1249,60 1253,58" fill="#17d9dc" />
      </svg>
    </div>
  );
}
